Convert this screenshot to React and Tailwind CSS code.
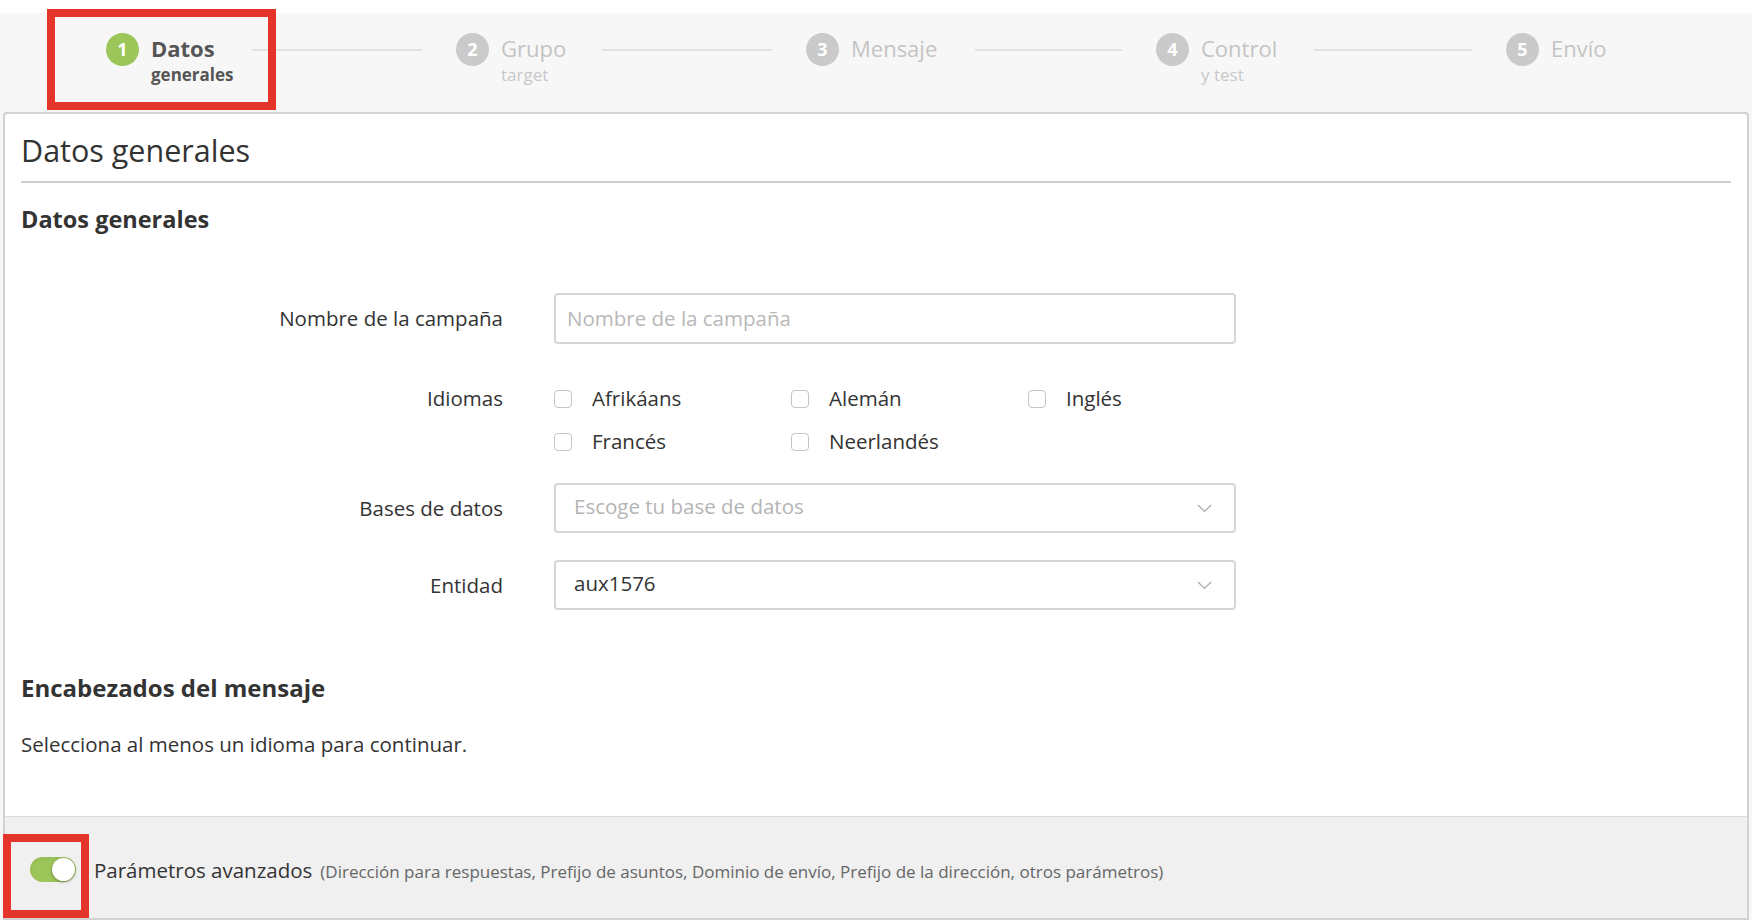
import React from "react";

const steps = [
    { n: 1, title: "Datos", sub: "generales", active: true, lineMl: "ml-[18px]" },
    { n: 2, title: "Grupo", sub: "target", lineMl: "ml-[36px]" },
    { n: 3, title: "Mensaje", sub: "", lineMl: "ml-[38px]" },
    { n: 4, title: "Control", sub: "y test", lineMl: "ml-[37px]" },
    { n: 5, title: "Envío", sub: "", last: true },
];

function Step({ step }) {
    return (
        <div className={`flex items-start ${step.last ? "" : "w-[350px] shrink-0"}`}>
            <div
                className={`w-[33px] h-[33px] rounded-full flex items-center justify-center text-white text-[18px] font-bold shrink-0 ${
                    step.active ? "bg-[#9cc55a]" : "bg-[#cacaca]"
                }`}
            >
                {step.n}
            </div>
            <div className="ml-[12px] mt-[1px] flex flex-col">
                <span
                    className={`text-[22px] leading-[28px] ${
                        step.active ? "font-bold text-[#555]" : "text-[#c4c4c4]"
                    }`}
                >
                    {step.title}
                </span>
                {step.sub && (
                    <span
                        className={`text-[17px] leading-[20px] mt-[3px] ${
                            step.active ? "font-bold text-[#555]" : "text-[#c8c8c8]"
                        }`}
                    >
                        {step.sub}
                    </span>
                )}
            </div>
            {!step.last && (
                <div className={`flex-1 h-[2px] bg-[#e2e2e2] mt-[16px] mr-[34px] ${step.lineMl}`} />
            )}
        </div>
    );
}

function Chevron() {
    return (
        <svg width="15" height="9" viewBox="0 0 15 9" fill="none" className="shrink-0">
            <path d="M1 1 L7.5 7.5 L14 1" stroke="#a8a8a8" strokeWidth="1.2" />
        </svg>
    );
}

function Checkbox({ label }) {
    return (
        <label className="flex items-center h-[43px]">
            <span className="w-[18px] h-[18px] rounded-[4px] border-[1.5px] border-[#c4c4c4] bg-white shrink-0" />
            <span className="ml-[20px] text-[20.5px] text-[#333]">{label}</span>
        </label>
    );
}

function Row({ label, children, className = "" }) {
    return (
        <div className={`flex ${className}`}>
            <div className="w-[482px] shrink-0 text-right text-[20.5px] text-[#333]">{label}</div>
            <div className="ml-[51px] w-[682px]">{children}</div>
        </div>
    );
}

export default function App() {
    return (
        <main
            className="w-full h-[920px] bg-[#f7f7f7] overflow-hidden relative"
            style={{ fontFamily: "'Open Sans', 'Liberation Sans', sans-serif" }}
        >
            <div className="h-[13px] bg-white" />
            {/* stepper */}
            <div className="h-[99px] flex pl-[106px] pt-[20px]">
                {steps.map((s) => (
                    <Step key={s.n} step={s} />
                ))}
            </div>
            <div className="absolute left-[47px] top-[9px] w-[229px] h-[101px] border-[8px] border-[#e5342a]" />

            {/* card */}
            <section className="mx-[3px] h-[808px] bg-white border-2 border-[#d2d2d2] rounded-t-[4px] flex flex-col">
                <div className="px-[16px]">
                    <h1 className="text-[30.5px] leading-[38px] text-[#333] pt-[17px] pb-[12px] border-b-2 border-[#cfcfcf]">
                        Datos generales
                    </h1>
                    <h2 className="text-[23.5px] leading-[30px] font-bold text-[#333] mt-[21px]">
                        Datos generales
                    </h2>

                    <Row label={<span className="leading-[51px]">Nombre de la campaña</span>} className="mt-[59px]">
                        <div className="h-[51px] rounded-[4px] border-2 border-[#d6d6d6] flex items-center px-[11px] text-[20.5px] text-[#b8b8b8]">
                            Nombre de la campaña
                        </div>
                    </Row>

                    <Row label={<span className="leading-[43px]">Idiomas</span>} className="mt-[33px]">
                        <div className="grid grid-cols-[237px_237px_1fr]">
                            <Checkbox label="Afrikáans" />
                            <Checkbox label="Alemán" />
                            <Checkbox label="Inglés" />
                            <Checkbox label="Francés" />
                            <Checkbox label="Neerlandés" />
                        </div>
                    </Row>

                    <Row label={<span className="leading-[50px]">Bases de datos</span>} className="mt-[20px]">
                        <div className="h-[50px] rounded-[4px] border-2 border-[#d6d6d6] flex items-center justify-between pl-[18px] pr-[22px] text-[20.5px] text-[#b4b4b4]">
                            <span className="-mt-[4px]">Escoge tu base de datos</span>
                            <Chevron />
                        </div>
                    </Row>

                    <Row label={<span className="leading-[50px]">Entidad</span>} className="mt-[27px]">
                        <div className="h-[50px] rounded-[4px] border-2 border-[#d6d6d6] flex items-center justify-between pl-[18px] pr-[22px] text-[20.5px] text-[#333]">
                            <span className="-mt-[4px]">aux1576</span>
                            <Chevron />
                        </div>
                    </Row>

                    <h2 className="text-[24px] leading-[32px] font-bold text-[#333] mt-[62px]">
                        Encabezados del mensaje
                    </h2>
                    <p className="text-[20.5px] leading-[28px] text-[#333] mt-[26px]">
                        Selecciona al menos un idioma para continuar.
                    </p>
                </div>

                {/* footer */}
                <div className="mt-auto h-[102px] bg-[#f0f0f0] border-t border-[#dcdcdc] flex items-start pt-[17px]">
                    <div className="w-[86px] h-[84px] border-[8px] border-[#e5342a] -ml-[2px] pl-[19px] pt-[15px] shrink-0">
                        <div className="w-[46px] h-[25px] rounded-full bg-[#9cc55a] relative shadow-inner">
                            <div className="absolute right-[1px] top-[1px] w-[23px] h-[23px] rounded-full bg-white shadow-[0_1px_3px_rgba(0,0,0,0.35)]" />
                        </div>
                    </div>
                    <div className="flex items-baseline mt-[21px] ml-[5px]">
                        <span className="text-[20.5px] text-[#333]">Parámetros avanzados</span>
                        <span className="ml-[8px] text-[17px] text-[#666]">
                            (Dirección para respuestas, Prefijo de asuntos, Dominio de envío, Prefijo de la dirección, otros parámetros)
                        </span>
                    </div>
                </div>
            </section>
        </main>
    );
}
